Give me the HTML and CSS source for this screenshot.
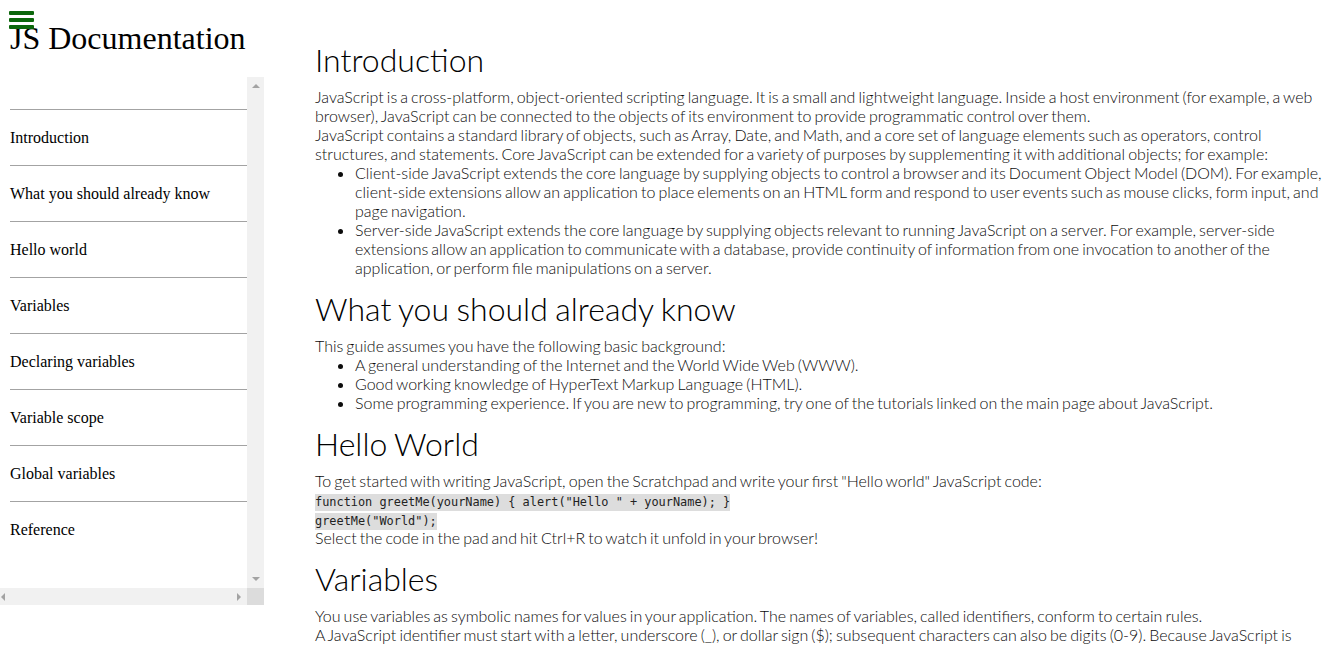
FILE: index.html
```html
<!DOCTYPE html>
<html lang="en">
<head>
<meta charset="utf-8">
<title>JS Documentation</title>
<link rel="stylesheet" href="styles.css">
</head>
<body>
<div class="page">
  <aside class="sidebar" id="navbar">
    <div class="menu-icon" aria-hidden="true"><span></span><span></span><span></span></div>
    <header><h1 class="title">JS Documentation</h1></header>
    <div class="nav-frame">
      <ul class="nav-list">
        <li><a class="nav-link" href="#Introduction">Introduction</a></li>
        <li><a class="nav-link" href="#What_you_should_already_know">What you should already know</a></li>
        <li><a class="nav-link" href="#Hello_world">Hello world</a></li>
        <li><a class="nav-link" href="#Variables">Variables</a></li>
        <li><a class="nav-link" href="#Declaring_variables">Declaring variables</a></li>
        <li><a class="nav-link" href="#Variable_scope">Variable scope</a></li>
        <li><a class="nav-link" href="#Global_variables">Global variables</a></li>
        <li><a class="nav-link" href="#Reference">Reference</a></li>
      </ul>
      <div class="vscroll"><span class="arrow arrow-up"></span><span class="arrow arrow-down"></span></div>
      <div class="hscroll"><span class="arrow arrow-left"></span><span class="arrow arrow-right"></span></div>
      <div class="corner"></div>
    </div>
  </aside>

  <main class="content" id="main-doc">
    <section class="main-section" id="Introduction">
      <h2>Introduction</h2>
      <p>JavaScript is a cross-platform, object-oriented scripting language. It is a small and lightweight language. Inside a host environment (for example, a web browser), JavaScript can be connected to the objects of its environment to provide programmatic control over them.</p>
      <p>JavaScript contains a standard library of objects, such as Array, Date, and Math, and a core set of language elements such as operators, control structures, and statements. Core JavaScript can be extended for a variety of purposes by supplementing it with additional objects; for example:</p>
      <ul>
        <li>Client-side JavaScript extends the core language by supplying objects to control a browser and its Document Object Model (DOM). For example, client-side extensions allow an application to place elements on an HTML form and respond to user events such as mouse clicks, form input, and page navigation.</li>
        <li>Server-side JavaScript extends the core language by supplying objects relevant to running JavaScript on a server. For example, server-side extensions allow an application to communicate with a database, provide continuity of information from one invocation to another of the application, or perform file manipulations on a server.</li>
      </ul>
    </section>

    <section class="main-section" id="What_you_should_already_know">
      <h2>What you should already know</h2>
      <p>This guide assumes you have the following basic background:</p>
      <ul>
        <li>A general understanding of the Internet and the World Wide Web (WWW).</li>
        <li>Good working knowledge of HyperText Markup Language (HTML).</li>
        <li>Some programming experience. If you are new to programming, try one of the tutorials linked on the main page about JavaScript.</li>
      </ul>
    </section>

    <section class="main-section" id="Hello_world">
      <h2>Hello World</h2>
      <p>To get started with writing JavaScript, open the Scratchpad and write your first "Hello world" JavaScript code:<br>
      <code>function greetMe(yourName) { alert("Hello " + yourName); }</code><br>
      <code>greetMe("World");</code><br>
      Select the code in the pad and hit Ctrl+R to watch it unfold in your browser!</p>
    </section>

    <section class="main-section" id="Variables">
      <h2>Variables</h2>
      <p>You use variables as symbolic names for values in your application. The names of variables, called identifiers, conform to certain rules.</p>
      <p>A JavaScript identifier must start with a letter, underscore (_), or dollar sign ($); subsequent characters can also be digits (0-9). Because JavaScript is case sensitive, letters include the characters "A" through "Z" (uppercase) and the characters "a" through "z" (lowercase).</p>
      <p>You can use ISO 8859-1 or Unicode letters such as å and ü in identifiers. You can also use the Unicode escape sequences as characters in identifiers. Some examples of legal names are Number_hits, temp99, and _name.</p>
    </section>

    <section class="main-section" id="Declaring_variables">
      <h2>Declaring variables</h2>
      <p>You can declare a variable in three ways:</p>
      <p>With the keyword var. For example, <code>var x = 42.</code> This syntax can be used to declare both local and global variables.</p>
      <p>By simply assigning it a value. For example, <code>x = 42.</code> This always declares a global variable. It generates a strict JavaScript warning. You shouldn't use this variant.</p>
      <p>With the keyword let. For example, <code>let y = 13.</code> This syntax can be used to declare a block scope local variable.</p>
    </section>

    <section class="main-section" id="Variable_scope">
      <h2>Variable scope</h2>
      <p>When you declare a variable outside of any function, it is called a global variable, because it is available to any other code in the current document. When you declare a variable within a function, it is called a local variable, because it is available only within that function.</p>
    </section>

    <section class="main-section" id="Global_variables">
      <h2>Global variables</h2>
      <p>Global variables are in fact properties of the global object. In web pages the global object is window, so you can set and access global variables using the window.variable syntax.</p>
    </section>

    <section class="main-section" id="Reference">
      <h2>Reference</h2>
      <p>All the documentation in this page is taken from MDN.</p>
    </section>
  </main>
</div>
</body>
</html>
```
FILE: styles.css
```css
html {
  scrollbar-width: none;
}

body {
  margin: 0;
  background: #ffffff;
  color: #000000;
  overflow-x: hidden;
}

.page {
  display: grid;
  grid-template-columns: 315px 1fr;
  align-items: start;
}

/* ---------- sidebar ---------- */
.sidebar {
  position: relative;
  width: 264px;
  font-family: "Liberation Serif", "Times New Roman", serif;
}

.menu-icon {
  position: absolute;
  left: 9px;
  top: 11px;
  width: 25px;
  display: flex;
  flex-direction: column;
  gap: 3px;
}

.menu-icon span {
  display: block;
  height: 4px;
  border-radius: 1px;
  background: #0b670b;
}

.title {
  margin: 20px 0 20px 10px;
  font-size: 32px;
  line-height: 37px;
  font-weight: 400;
  white-space: nowrap;
}

.nav-frame {
  display: grid;
  grid-template-columns: 247px 17px;
  grid-template-rows: 511px 17px;
}

.nav-list {
  margin: 0;
  padding: 32px 0 0 10px;
  list-style: none;
  overflow: hidden;
}

.nav-list li {
  box-sizing: border-box;
  height: 56px;
  border-top: 1px solid #a3a3a3;
  display: flex;
  align-items: center;
}

.nav-link {
  color: #000000;
  text-decoration: none;
  font-size: 16px;
  line-height: 18px;
  white-space: nowrap;
}

.vscroll {
  background: #f1f1f1;
  display: flex;
  flex-direction: column;
  justify-content: space-between;
  align-items: center;
  padding: 7px 0;
}

.hscroll {
  background: #f1f1f1;
  display: flex;
  justify-content: space-between;
  align-items: center;
  padding: 0 6px 0 1px;
}

.corner {
  background: #dcdcdc;
}

.arrow {
  display: block;
  width: 0;
  height: 0;
}

.arrow-up {
  border-left: 4px solid transparent;
  border-right: 4px solid transparent;
  border-bottom: 4px solid #a3a3a3;
}

.arrow-down {
  border-left: 4px solid transparent;
  border-right: 4px solid transparent;
  border-top: 4px solid #a3a3a3;
}

.arrow-left {
  border-top: 4px solid transparent;
  border-bottom: 4px solid transparent;
  border-right: 4px solid #a3a3a3;
}

.arrow-right {
  border-top: 4px solid transparent;
  border-bottom: 4px solid transparent;
  border-left: 4px solid #a3a3a3;
}

/* ---------- main content ---------- */
.content {
  padding-top: 28px;
  font-family: Lato, "Open Sans", sans-serif;
  font-weight: 300;
  font-size: 16px;
  line-height: 19px;
  word-spacing: -0.08em;
  color: #0c0c0c;
}

.main-section h2 {
  margin: 13px 0 8px;
  font-size: 32px;
  line-height: 38px;
  font-weight: 300;
  color: #000000;
}

.main-section p {
  margin: 0;
}

.main-section ul {
  margin: 0;
  padding-left: 40px;
}

.main-section code {
  font-family: "DejaVu Sans Mono", "Liberation Mono", monospace;
  font-size: 11.9px;
  line-height: 12px;
  word-spacing: normal;
  background: #dddddd;
  padding: 1px 0 2px;
  color: #222222;
}
```
